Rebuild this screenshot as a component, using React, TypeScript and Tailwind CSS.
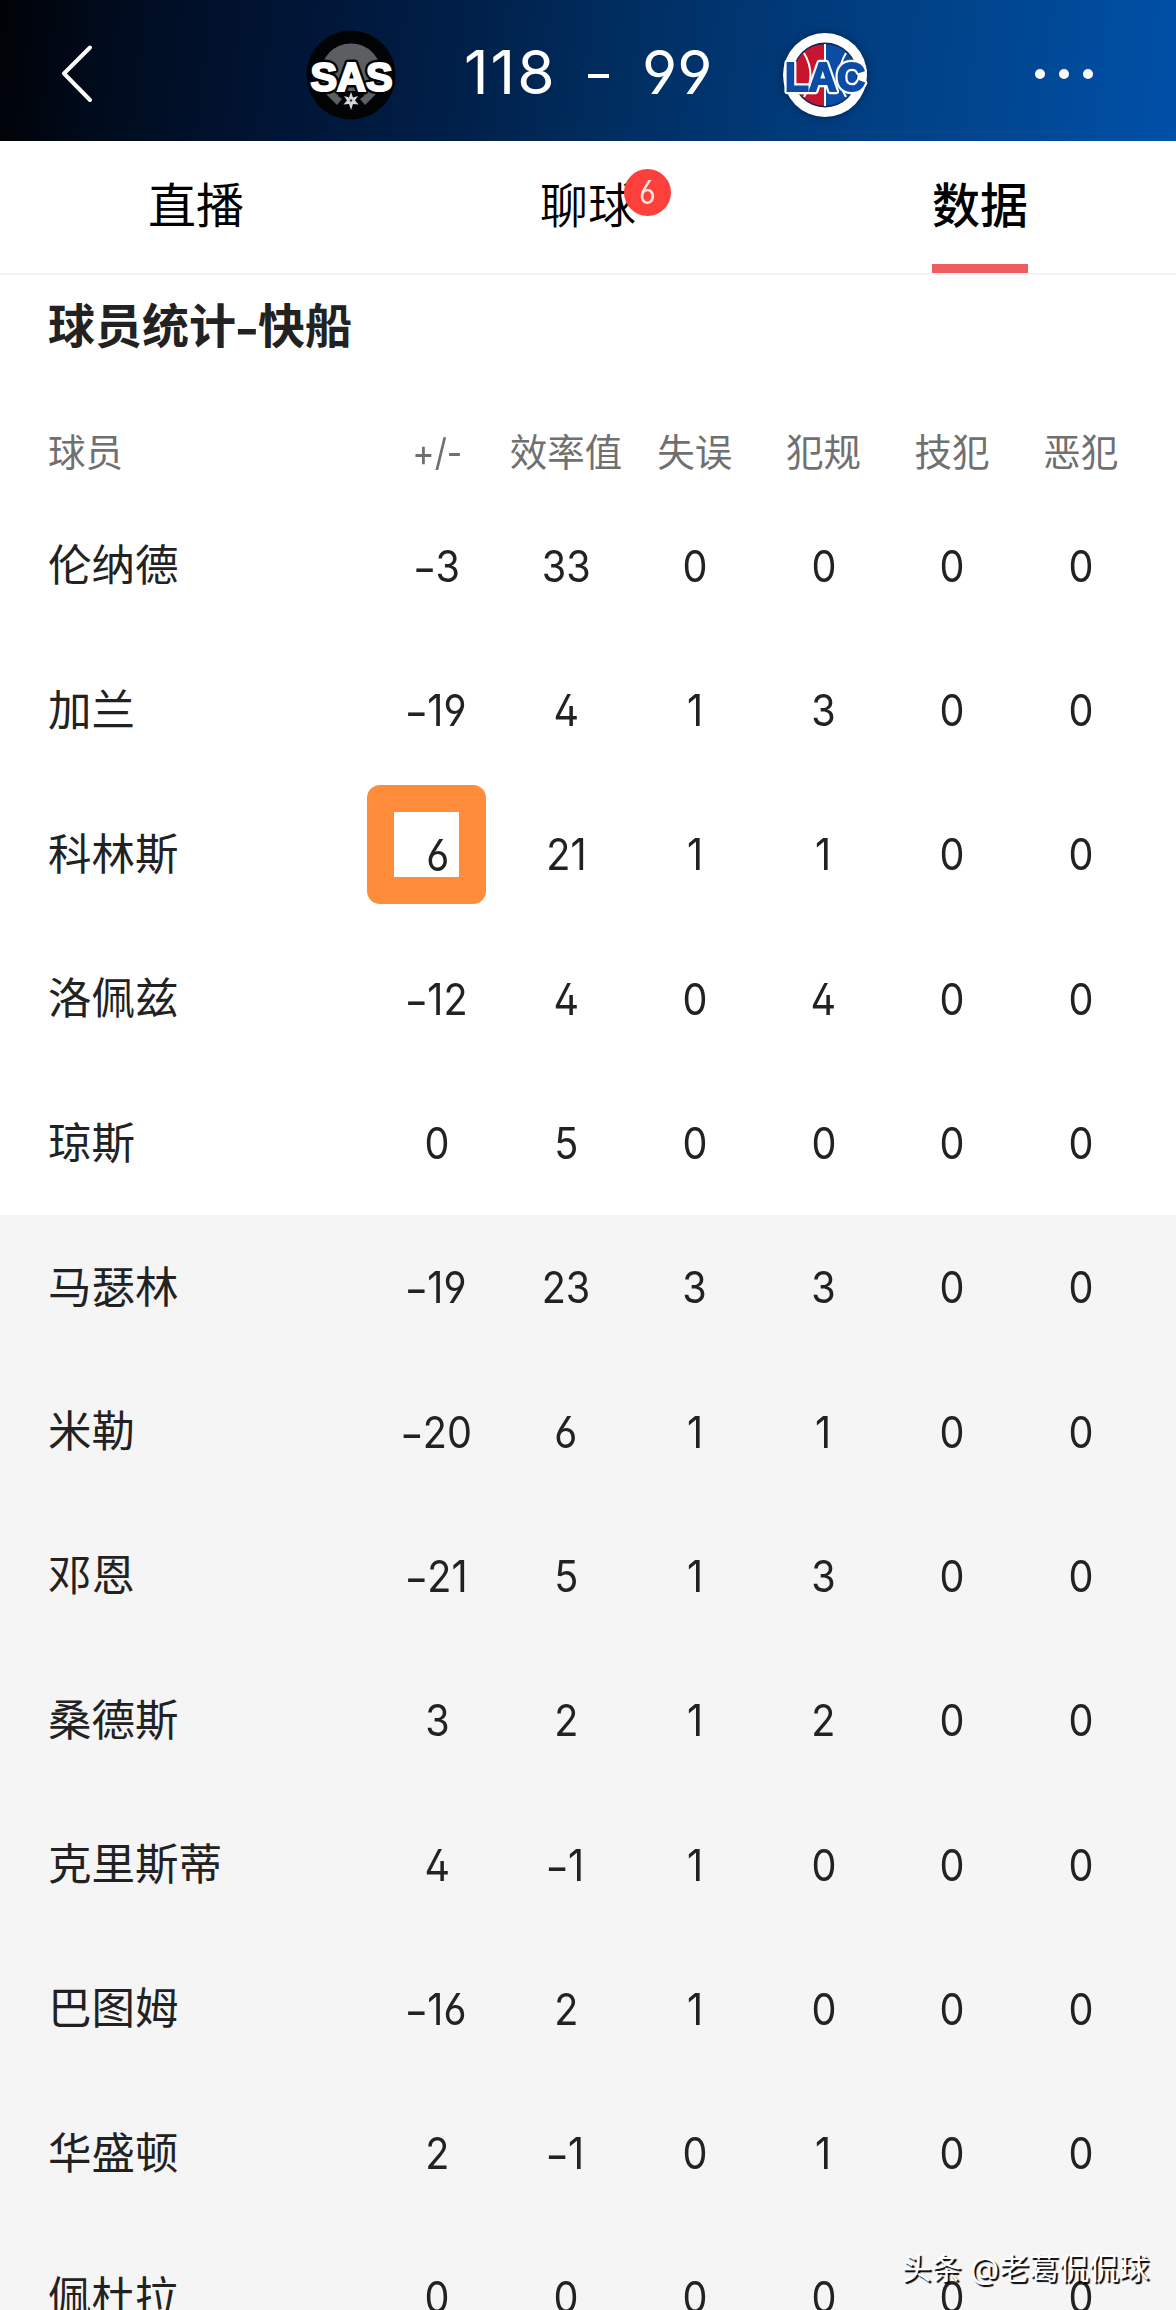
import { clsx } from "clsx";

type Player = {
  name: string;
  stats: string[];
  marked?: boolean;
};

const columns = ["+/-", "效率值", "失误", "犯规", "技犯", "恶犯"];

const starters: Player[] = [
  { name: "伦纳德", stats: ["-3", "33", "0", "0", "0", "0"] },
  { name: "加兰", stats: ["-19", "4", "1", "3", "0", "0"] },
  { name: "科林斯", stats: ["6", "21", "1", "1", "0", "0"], marked: true },
  { name: "洛佩兹", stats: ["-12", "4", "0", "4", "0", "0"] },
  { name: "琼斯", stats: ["0", "5", "0", "0", "0", "0"] },
];

const bench: Player[] = [
  { name: "马瑟林", stats: ["-19", "23", "3", "3", "0", "0"] },
  { name: "米勒", stats: ["-20", "6", "1", "1", "0", "0"] },
  { name: "邓恩", stats: ["-21", "5", "1", "3", "0", "0"] },
  { name: "桑德斯", stats: ["3", "2", "1", "2", "0", "0"] },
  { name: "克里斯蒂", stats: ["4", "-1", "1", "0", "0", "0"] },
  { name: "巴图姆", stats: ["-16", "2", "1", "0", "0", "0"] },
  { name: "华盛顿", stats: ["2", "-1", "0", "1", "0", "0"] },
  { name: "佩杜拉", stats: ["0", "0", "0", "0", "0", "0"] },
];

function SpursLogo() {
  return (
    <svg viewBox="0 0 100 100" className="w-[100px] h-[100px]">
      <circle cx="50" cy="50" r="44.5" fill="#020304" />
      <circle cx="50" cy="49" r="30.5" fill="#5b5f61" />
      <path d="M38 66 H62 L66 86 H34 Z" fill="#020304" />
      <path d="M24 68 L33 68 L41 74 L36 80 Z M76 68 L67 68 L59 74 L64 80 Z" fill="#5b5f61" />
      <text
        x="9.5"
        y="65.5"
        textLength="82"
        lengthAdjust="spacingAndGlyphs"
        fontSize="40"
        fontWeight="900"
        fontFamily="'Liberation Sans', sans-serif"
        fill="#fff"
        stroke="#020304"
        strokeWidth="7"
        strokeLinejoin="round"
        paintOrder="stroke"
      >
        SAS
      </text>
      <text
        x="9.5"
        y="65.5"
        textLength="82"
        lengthAdjust="spacingAndGlyphs"
        fontSize="40"
        fontWeight="900"
        fontFamily="'Liberation Sans', sans-serif"
        fill="#fff"
        stroke="#fff"
        strokeWidth="2.2"
      >
        SAS
      </text>
      <path
        d="M50 67 L52 72.5 L57 71 L54 75.5 L57.5 79.5 L52 79 L50 85 L48 79 L42.5 79.5 L46 75.5 L43 71 L48 72.5 Z"
        fill="#d5d8d9"
      />
      <circle cx="50" cy="75.5" r="1.2" fill="#333" />
    </svg>
  );
}

function ClippersLogo() {
  return (
    <svg viewBox="0 0 100 100" className="w-[100px] h-[100px] drop-shadow-[0_0_5px_rgba(0,20,50,0.6)]">
      <circle cx="50" cy="50" r="42" fill="#fff" />
      <circle cx="50" cy="50" r="32.5" fill="#0c2a58" />
      <path d="M49 19.5 A30.5 30.5 0 0 0 49 80.5 Z" fill="#c8152f" />
      <path d="M51 19.5 A30.5 30.5 0 0 1 51 80.5 Z" fill="#0b4ca6" />
      <path d="M50 19 V81 M29 28 Q42 50 29 72 M71 28 Q58 50 71 72" fill="none" stroke="#fff" strokeWidth="2" />
      <text
        x="10"
        y="65.5"
        textLength="80"
        lengthAdjust="spacingAndGlyphs"
        fontSize="40"
        fontWeight="900"
        fontFamily="'Liberation Sans', sans-serif"
        fill="#0b4ca6"
        stroke="#fff"
        strokeWidth="6.5"
        strokeLinejoin="round"
        paintOrder="stroke"
      >
        LAC
      </text>
      <text
        x="10"
        y="65.5"
        textLength="80"
        lengthAdjust="spacingAndGlyphs"
        fontSize="40"
        fontWeight="900"
        fontFamily="'Liberation Sans', sans-serif"
        fill="#0b4ca6"
        stroke="#0b4ca6"
        strokeWidth="2"
      >
        LAC
      </text>
    </svg>
  );
}

function ScoreHeader() {
  return (
    <header className="flex items-center h-[141px] text-white bg-[linear-gradient(97deg,#000206_0%,#000c1e_10%,#001536_25%,#00204a_40%,#002d5f_52%,#003b7b_68%,#004690_84%,#0050a8_100%)]">
      <svg viewBox="0 0 40 60" fill="none" className="ml-14 mt-1 w-10 h-[60px]">
        <path d="M34 4.5 L8 30.5 L34 57" stroke="#fff" strokeWidth="4" strokeLinecap="round" strokeLinejoin="round" />
      </svg>
      <div className="ml-[205px] mt-2">
        <SpursLogo />
      </div>
      <div className="flex items-center ml-[63px] mt-[3px] w-[250px] text-[60.5px] leading-none [font-feature-settings:'cv03','cv04']">
        <span className="w-[92px] tracking-[2px]">118</span>
        <span className="ml-[32px] mt-2 w-[21px] h-1 bg-white" />
        <span className="ml-[33px]">99</span>
      </div>
      <div className="ml-[61px] mt-2">
        <ClippersLogo />
      </div>
      <div className="flex gap-[14px] ml-auto mr-[83px] mt-1.5">
        <span className="size-2.5 rounded-full bg-white" />
        <span className="size-2.5 rounded-full bg-white" />
        <span className="size-2.5 rounded-full bg-white" />
      </div>
    </header>
  );
}

function Tabs() {
  return (
    <nav className="grid grid-cols-3 h-[134px] border-b-2 border-[#f3f3f3] text-[48px] leading-[129px] text-black text-center">
      <div>直播</div>
      <div className="font-[350]">
        <span className="relative">
          聊球
          <span className="absolute left-[84px] top-[-7px] flex items-center justify-center size-[47px] rounded-full bg-[#fd403c] text-[32px] leading-none font-normal text-[#ffe6e0] [font-feature-settings:'cv03']">
            <span className="scale-x-90">6</span>
          </span>
        </span>
      </div>
      <div className="flex justify-center">
        <span className="h-[132px] border-b-9 border-[#ee5d60] font-medium">数据</span>
      </div>
    </nav>
  );
}

// the sign sits lower and runs wider than the font's own hyphen
function StatValue({ value }: { value: string }) {
  const negative = value.startsWith("-");
  return (
    <span className="relative inline-block scale-x-90 text-[44px] [font-feature-settings:'cv02','cv03','cv04']">
      {negative && <span className="inline-block mr-[2px] scale-x-130 translate-y-[2px]">-</span>}
      {negative ? value.slice(1) : value}
    </span>
  );
}

function PlayerRow({ player }: { player: Player }) {
  return (
    <div className="grid grid-cols-[373px_repeat(6,128.7px)] items-center h-[144.3px] text-[43.5px] leading-none">
      <div className="pl-12">{player.name}</div>
      {player.stats.map((value, i) => {
        const marked = player.marked && i === 0;
        return (
          <div key={i} className={clsx("text-center", marked && "relative flex items-center justify-center h-full")}>
            {marked && (
              <span className="absolute left-[-6px] top-[2px] size-[119px] border-27 border-[#ff8c3a] rounded-[13px]" />
            )}
            <StatValue value={value} />
          </div>
        );
      })}
    </div>
  );
}

export default function App() {
  return (
    <div className="relative w-[1176px] h-[2310px] overflow-hidden bg-white text-[#222] font-['Inter','Noto_Sans_CJK_SC',sans-serif]">
      <ScoreHeader />
      <Tabs />
      <h2 className="h-[136px] pl-12 pt-[27px] text-[47px] leading-[48px] font-bold">
        球员统计<span className="inline-block scale-x-115 translate-y-[3px]">-</span>快船
      </h2>
      <div className="grid grid-cols-[373px_repeat(6,128.7px)] items-center h-[83px] text-[37.5px] leading-none text-[#707070]">
        <div className="pl-12">球员</div>
        {columns.map((label) => (
          <div key={label} className={clsx("text-center", label === "+/-" && "scale-x-90")}>
            {label}
          </div>
        ))}
      </div>
      <section>
        {starters.map((player) => (
          <PlayerRow key={player.name} player={player} />
        ))}
      </section>
      <section className="bg-[#f5f5f5]">
        {bench.map((player) => (
          <PlayerRow key={player.name} player={player} />
        ))}
      </section>
      <div className="absolute right-[27px] bottom-[25px] text-[30px] leading-[34px] text-white [text-shadow:2px_2px_1px_#000]">
        头条 @老葛侃侃球
      </div>
    </div>
  );
}
